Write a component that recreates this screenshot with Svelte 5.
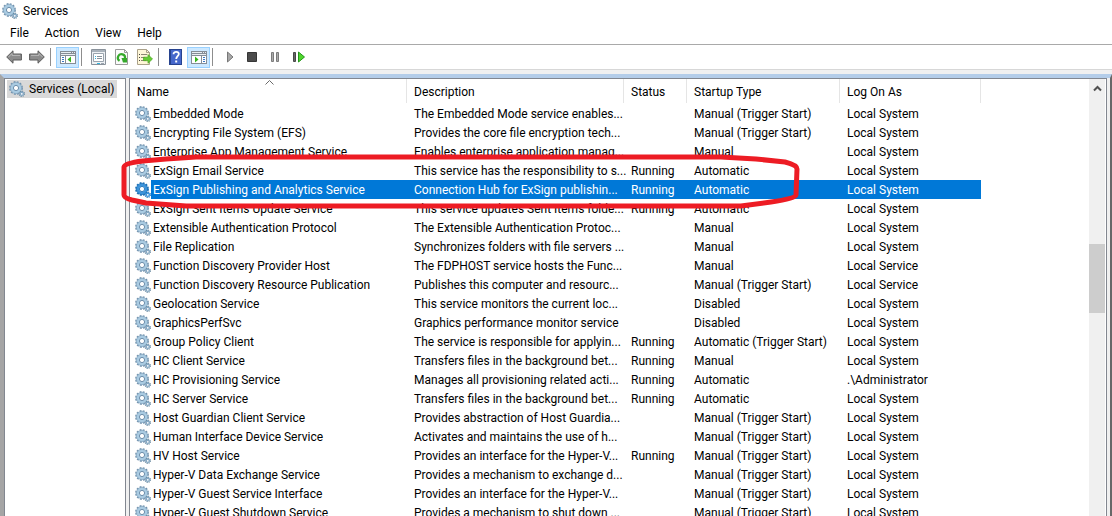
<script>
  const columns = ["Name", "Description", "Status", "Startup Type", "Log On As"];
  const menus = ["File", "Action", "View", "Help"];

  const MANUAL = "Manual";
  const TRIGGER = "Manual (Trigger Start)";
  const AUTO = "Automatic";
  const SYSTEM = "Local System";

  const services = [
    ["Embedded Mode", "The Embedded Mode service enables...", "", TRIGGER, SYSTEM],
    ["Encrypting File System (EFS)", "Provides the core file encryption tech...", "", TRIGGER, SYSTEM],
    ["Enterprise App Management Service", "Enables enterprise application manag...", "", MANUAL, SYSTEM],
    ["ExSign Email Service", "This service has the responsibility to s...", "Running", AUTO, SYSTEM],
    ["ExSign Publishing and Analytics Service", "Connection Hub for ExSign publishin...", "Running", AUTO, SYSTEM],
    ["ExSign Sent Items Update Service", "This service updates Sent Items folde...", "Running", AUTO, SYSTEM],
    ["Extensible Authentication Protocol", "The Extensible Authentication Protoc...", "", MANUAL, SYSTEM],
    ["File Replication", "Synchronizes folders with file servers ...", "", MANUAL, SYSTEM],
    ["Function Discovery Provider Host", "The FDPHOST service hosts the Func...", "", MANUAL, "Local Service"],
    ["Function Discovery Resource Publication", "Publishes this computer and resourc...", "", TRIGGER, "Local Service"],
    ["Geolocation Service", "This service monitors the current loc...", "", "Disabled", SYSTEM],
    ["GraphicsPerfSvc", "Graphics performance monitor service", "", "Disabled", SYSTEM],
    ["Group Policy Client", "The service is responsible for applyin...", "Running", "Automatic (Trigger Start)", SYSTEM],
    ["HC Client Service", "Transfers files in the background bet...", "Running", MANUAL, SYSTEM],
    ["HC Provisioning Service", "Manages all provisioning related acti...", "Running", AUTO, ".\\Administrator"],
    ["HC Server Service", "Transfers files in the background bet...", "Running", AUTO, SYSTEM],
    ["Host Guardian Client Service", "Provides abstraction of Host Guardia...", "", TRIGGER, SYSTEM],
    ["Human Interface Device Service", "Activates and maintains the use of h...", "", TRIGGER, SYSTEM],
    ["HV Host Service", "Provides an interface for the Hyper-V...", "Running", TRIGGER, SYSTEM],
    ["Hyper-V Data Exchange Service", "Provides a mechanism to exchange d...", "", TRIGGER, SYSTEM],
    ["Hyper-V Guest Service Interface", "Provides an interface for the Hyper-V...", "", TRIGGER, SYSTEM],
    ["Hyper-V Guest Shutdown Service", "Provides a mechanism to shut down ...", "", TRIGGER, SYSTEM]
  ];

  let selected = $state(4);
</script>

{#snippet gears(active)}
  <svg class="gears" class:active width="16" height="16" viewBox="0 0 16 16" aria-hidden="true">
    <circle class="teeth" cx="7" cy="7" r="5.9" fill="none" stroke="#6f90ac" stroke-width="2" stroke-dasharray="1.85 1.24" />
    <circle class="ring" cx="7" cy="7" r="4.2" fill="#fff" stroke="#a9cbe2" stroke-width="2.8" />
    <circle class="rim" cx="7" cy="7" r="5.6" fill="none" stroke="#86a8c2" stroke-width="0.7" />
    <circle class="rim" cx="7" cy="7" r="2.6" fill="none" stroke="#5c81a2" stroke-width="0.9" />
    <circle class="teeth" cx="12.8" cy="12.8" r="2.6" fill="none" stroke="#66879f" stroke-width="1.2" stroke-dasharray="1.1 .94" />
    <circle class="ring" cx="12.8" cy="12.8" r="1.6" fill="#fff" stroke="#84a8c4" stroke-width="1.4" />
  </svg>
{/snippet}

<div class="window">
  <header>
    {@render gears(false)}
    <h1>Services</h1>
  </header>

  <nav>
    {#each menus as menu}
      <button>{menu}</button>
    {/each}
  </nav>

  <div class="toolbar">
    <button aria-label="Back">
      <svg width="16" height="16" viewBox="0 0 16 16">
        <path d="M.7 8 7 1.8V5h8.4v6H7v3.2z" fill="#8c8c8c" stroke="#5c5c5c" />
        <path d="M2.5 8 6 4.5V6.4h8" fill="none" stroke="#b8b8b8" />
      </svg>
    </button>
    <button aria-label="Forward">
      <svg width="16" height="16" viewBox="0 0 16 16">
        <path d="M15.3 8 9 1.8V5H.6v6H9v3.2z" fill="#8c8c8c" stroke="#5c5c5c" />
        <path d="M13.5 8 10 4.5V6.4H2" fill="none" stroke="#b8b8b8" />
      </svg>
    </button>
    <i></i>
    <button class="on" aria-label="Show/Hide Console Tree">
      <svg width="16" height="16" viewBox="0 0 16 16">
        <path d="M0 2h16v13H0z" fill="#858d96" />
        <path d="M1 3h10v1H1zM12 3h1v1h-1zM14 3h1v1h-1zM1 5h14v1H1z" fill="#e8edf1" />
        <path d="M1 7h4v7H1zM6 7h9v7H6z" fill="#fff" />
        <path d="M2 8h2v1H2zM2 10h2v1H2zM2 12h2v1H2z" fill="#3b78c4" />
        <path d="M11 7.5v6L7.5 10.5z" fill="#35b51c" />
      </svg>
    </button>
    <i></i>
    <button aria-label="Properties">
      <svg width="16" height="16" viewBox="0 0 16 16">
        <path d="M.5.5h14v15H.5z" fill="#eef1f4" stroke="#8a929b" />
        <path d="M1 1h13v2H1z" fill="#a9b2bb" />
        <path d="M2.5 4.5h10v8h-10z" fill="#fff" stroke="#9aa4ae" />
        <path d="M4 7h1v1H4zM4 9h1v1H4z" fill="#31b5df" />
        <path d="M6 7.5h5M6 9.5h5" stroke="#87919b" />
        <path d="M6 14h3v1H6z" fill="#31b5df" />
        <path d="M10 14h3v1h-3z" fill="#9aa4ae" />
      </svg>
    </button>
    <button aria-label="Refresh">
      <svg width="16" height="16" viewBox="0 0 16 16">
        <path d="M1.5.5h9l3 3v12h-12z" fill="#fbfbfb" stroke="#9b9b9b" />
        <path d="M10.5.5v3h3" fill="none" stroke="#9b9b9b" />
        <path d="M5.5 11.8A3.6 3.6 0 1 1 11 9.5" fill="none" stroke="#36a92b" stroke-width="2.2" />
        <path d="M7.5 9h5.5v4.5H9z" fill="#36a92b" />
      </svg>
    </button>
    <button aria-label="Export List">
      <svg width="16" height="16" viewBox="0 0 16 16">
        <path d="M.5.5h9l3 3v12H.5z" fill="#fff7d8" stroke="#aaa18a" />
        <path d="M9.5.5v3h3" fill="none" stroke="#aaa18a" />
        <path d="M2 5h1v1H2zM2 8h1v1H2zM2 11h1v1H2z" fill="#444" />
        <path d="M4 5.5h6M4 8.5h4M4 11.5h5" stroke="#8e8774" />
        <path d="M6.5 8.2H11V5.5L15.5 10 11 14.3v-2.6H6.5z" fill="#66cc35" stroke="#4aa521" stroke-width=".7" />
      </svg>
    </button>
    <i></i>
    <button aria-label="Help">
      <svg width="16" height="16" viewBox="0 0 16 16">
        <path d="M1 0h13v16H1z" fill="#27438f" />
        <path d="M3 1h10v14H3z" fill="#4567cb" />
        <path d="M5.5 5.2C5.5 2 10.8 2.2 10.8 5c0 2-2.6 2.4-2.6 5" fill="none" stroke="#fff" stroke-width="1.8" />
        <path d="M7.2 11.5h2v2h-2z" fill="#fff" />
      </svg>
    </button>
    <button class="on" aria-label="Show/Hide Action Pane">
      <svg width="16" height="16" viewBox="0 0 16 16">
        <path d="M0 2h16v13H0z" fill="#858d96" />
        <path d="M1 3h10v1H1zM12 3h1v1h-1zM14 3h1v1h-1zM1 5h14v1H1z" fill="#e8edf1" />
        <path d="M1 7h9v7H1zM11 7h4v7h-4z" fill="#fff" />
        <path d="M12 8h2v1h-2zM12 10h2v1h-2zM12 12h2v1h-2z" fill="#3b78c4" />
        <path d="M4 7.5v6l3.5-3z" fill="#35b51c" />
      </svg>
    </button>
    <i></i>
    <button aria-label="Start Service">
      <svg width="16" height="16" viewBox="0 0 16 16">
        <path d="M5.5 3v10l5.5-5z" fill="#a8a8a8" stroke="#777" />
      </svg>
    </button>
    <button aria-label="Stop Service">
      <svg width="16" height="16" viewBox="0 0 16 16">
        <path d="M2.5 3.5h9v9h-9z" fill="#4b4b4b" stroke="#363636" />
      </svg>
    </button>
    <button aria-label="Pause Service">
      <svg width="16" height="16" viewBox="0 0 16 16">
        <path d="M3.5 3.5h2v9h-2zM8.5 3.5h2v9h-2z" fill="#aaa" stroke="#7c7c7c" />
      </svg>
    </button>
    <button aria-label="Restart Service">
      <svg width="16" height="16" viewBox="0 0 16 16">
        <path d="M2.5 3.5h2v9h-2z" fill="#666" stroke="#484848" />
        <path d="M7.5 3v10l6-5z" fill="#4fd62d" stroke="#24971a" />
      </svg>
    </button>
  </div>

  <div class="content">
    <aside>
      <button>
        {@render gears(false)}
        <span>Services (Local)</span>
      </button>
    </aside>

    <main>
      <div class="list">
        <table>
          <colgroup>
            <col class="name" />
            <col class="description" />
            <col class="status" />
            <col class="startup" />
            <col class="logon" />
          </colgroup>
          <thead>
            <tr>
              {#each columns as column, i}
                <th>
                  {column}
                  {#if i === 0}
                    <svg class="sort" width="9" height="5" viewBox="0 0 9 5" aria-hidden="true">
                      <path d="M.5 4.5l4-4 4 4" fill="none" stroke="#6b6b6b" />
                    </svg>
                  {/if}
                </th>
              {/each}
            </tr>
          </thead>
          <tbody>
            {#each services as [name, ...cells], i}
              <tr class:selected={selected === i} onclick={() => (selected = i)}>
                <td>
                  <div class="service">
                    {@render gears(selected === i)}
                    <span>{name}</span>
                  </div>
                </td>
                {#each cells as cell}
                  <td>{cell}</td>
                {/each}
              </tr>
            {/each}
          </tbody>
        </table>
        <svg class="marker" width="680" height="58" viewBox="0 0 680 58" aria-hidden="true">
          <path
            d="M22 8L45 6 75 4H600L635 6 664 9Q676 12 676 16L675 42Q674 46 650 49L620 53H65L25 50 11 47Q3 45 3 42L3 14Q4 10 22 8Z"
            fill="none"
            stroke="#ed1c24"
            stroke-width="5"
            stroke-linejoin="round"
          />
        </svg>
      </div>
      <div class="scrollbar">
        <svg width="9" height="7" viewBox="0 0 9 7" aria-hidden="true">
          <path d="M1 5.5l3.5-3.5L8 5.5" fill="none" stroke="#505050" stroke-width="2" />
        </svg>
        <div class="thumb"></div>
      </div>
    </main>
  </div>
</div>

<style>
  .window {
    height: 100vh;
    display: flex;
    flex-direction: column;
    overflow: hidden;
    background: white;
    color: black;
    font: 12px/19px "Segoe UI", Roboto, sans-serif;
  }

  button {
    font: inherit;
    color: inherit;
    border: 0;
    padding: 0;
    margin: 0;
    background: transparent;
  }

  svg {
    display: block;
    flex: none;
  }

  header {
    height: 22px;
    display: flex;
    align-items: center;
    gap: 5px;
    padding-left: 2px;
  }

  h1 {
    margin: 0;
    font-size: 12px;
    font-weight: normal;
  }

  nav {
    height: 22px;
    display: flex;
    align-items: center;
    gap: 16px;
    padding-left: 10px;
  }

  .toolbar {
    height: 24px;
    display: flex;
    align-items: center;
    padding-left: 2px;
    border-top: 1px solid #a9a9a9;
    border-bottom: 1px solid #d7d7d7;
  }

  .toolbar button {
    width: 23px;
    height: 21px;
    display: flex;
    align-items: center;
    justify-content: center;
    box-sizing: border-box;
  }

  .toolbar .on {
    background: #cce8ff;
    border: 1px solid #99d1ff;
  }

  .toolbar i {
    width: 1px;
    height: 18px;
    margin: 0 5px 0 2px;
    background: #8d8d8d;
  }

  .content {
    flex: 1;
    min-height: 0;
    display: flex;
    gap: 3px;
    margin-top: 4px;
    padding-right: 3px;
    border-top: 4px solid #b4cde9;
    border-left: 4px solid #a5a5a5;
    border-right: 2px solid #686868;
    background: #f0f0f0;
    box-shadow: 0 -4px #f0f0f0;
  }

  aside {
    width: 120px;
    border: 1px solid #828790;
    border-bottom: 0;
    background: white;
  }

  aside button {
    display: flex;
    align-items: center;
    gap: 4px;
    height: 18px;
    margin: 1px 0 0 2px;
    padding: 0 2px;
    background: #d9d9d9;
    white-space: nowrap;
  }

  main {
    flex: 1;
    min-width: 0;
    display: flex;
    border: 1px solid #828790;
    border-bottom: 0;
    background: white;
  }

  .list {
    flex: 1;
    min-width: 0;
    position: relative;
  }

  table {
    width: 851px;
    table-layout: fixed;
    border-collapse: collapse;
    line-height: 17px;
  }

  .name {
    width: 277px;
  }

  .description {
    width: 217px;
  }

  .status {
    width: 63px;
  }

  .startup {
    width: 153px;
  }

  .logon {
    width: 141px;
  }

  th,
  td {
    padding: 2px 0 0 7px;
    font-weight: normal;
    text-align: left;
    white-space: nowrap;
  }

  th {
    height: 23px;
    position: relative;
    background: linear-gradient(#e5e5e5, #e5e5e5) right top / 1px 24px no-repeat;
  }

  td:first-child {
    padding: 0 0 0 5px;
  }

  .sort {
    position: absolute;
    top: 1px;
    left: 135px;
  }

  .service {
    display: flex;
    align-items: center;
  }

  .service span {
    flex: 1;
    padding: 2px 0 0 2px;
  }

  .selected td + td,
  .selected span {
    background: #0078d7;
    color: white;
  }

  .gears.active .ring {
    stroke: #3c94dc;
  }

  .gears.active .teeth,
  .gears.active .rim {
    stroke: #1b6fb5;
  }

  .marker {
    position: absolute;
    top: 74px;
    left: -9px;
    pointer-events: none;
  }

  .scrollbar {
    width: 16px;
    display: flex;
    flex-direction: column;
    align-items: center;
    margin-right: 1px;
    padding-top: 6px;
    box-sizing: border-box;
    background: #f0f0f0;
  }

  .thumb {
    width: 100%;
    height: 16%;
    margin-top: 152px;
    background: #cdcdcd;
  }
</style>
